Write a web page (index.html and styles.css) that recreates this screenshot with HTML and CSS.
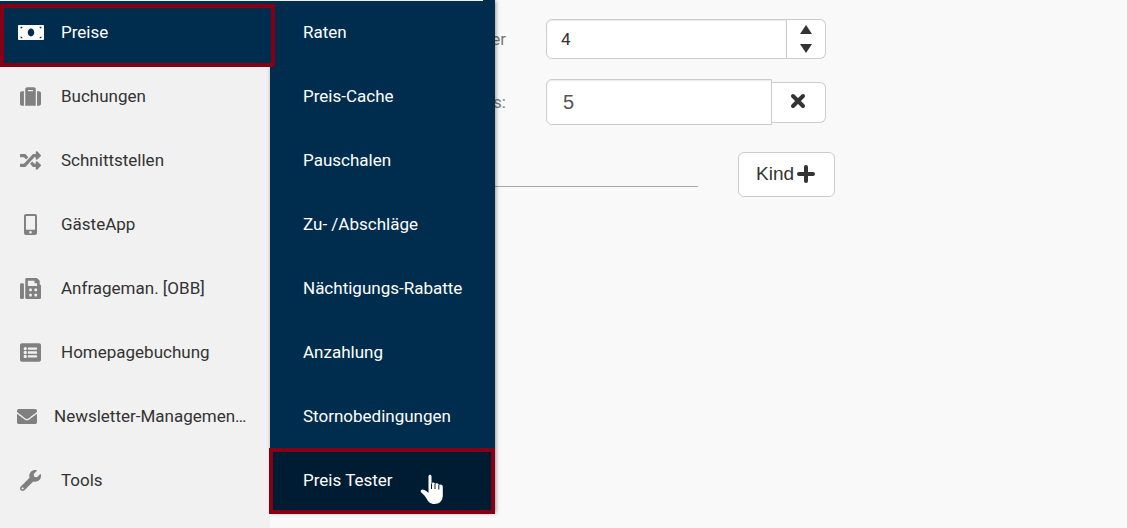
FILE: index.html
```html
<!DOCTYPE html>
<html lang="de">
<head>
    <meta charset="UTF-8">
    <meta name="viewport" content="width=device-width, initial-scale=1.0">
    <title>Preis Tester</title>
    <link rel="stylesheet" href="styles.css">
</head>
<body>

<div class="page">
    <!-- Sidebar -->
    <nav class="sidebar">
        <ul class="menu">
            <li>
                <a href="#" class="menu-link active">
                    <span class="menu-icon"><svg width="26" height="21" viewBox="0 0 640 512"><path d="M608 72H32C14.33 72 0 82 0 96v320c0 14 14.33 24 32 24h576c17.670 0 32-10 32-24V96c0-14-14.330-24-32-24zM64 400v-48c26 0 48 22 48 48H64zm0-240v-48h48c0 26-22 48-48 48zm256 192c-44.190 0-80-42.990-80-96 0-53.020 35.820-96 80-96s80 42.980 80 96c0 53.030-35.830 96-80 96zm256 48h-48c0-26 22-48 48-48v48zm0-240c-26 0-48-22-48-48h48v48z"/></svg></span>
                    <span>Preise</span>
                </a>

                <!-- Flyout -->
                <ul class="flyout">
                    <li><a href="#">Raten</a></li>
                    <li><a href="#">Preis-Cache</a></li>
                    <li><a href="#">Pauschalen</a></li>
                    <li><a href="#">Zu- /Abschläge</a></li>
                    <li><a href="#">Nächtigungs-Rabatte</a></li>
                    <li><a href="#">Anzahlung</a></li>
                    <li><a href="#">Stornobedingungen</a></li>
                    <li>
                        <a href="#" class="selected">Preis Tester
                            <svg class="pointer" width="24" height="31" viewBox="0 0 24 31"><path d="M8.500 2.500C8.500 .2 11.500 .2 11.500 2.500V9.500C12 8 14.700 8.200 15 10C15.800 8.600 18.500 9 18.800 11C20 9.800 22.800 10.500 22.800 12.800V21C22.800 27 19.500 30 14.500 30C10 30 8.200 27.500 6.500 24.500C5 22 3.500 20.500 1.300 18.500C-.2 17 1.500 15 3.500 15.700C5.500 16.300 7 17.500 8.500 19Z"/><path class="pointer-lines" d="M11.500 9.500V15M15 10V15M18.800 11V15.500"/></svg>
                        </a>
                    </li>
                </ul>
            </li>
            <li>
                <a href="#" class="menu-link">
                    <span class="menu-icon"><svg width="21" height="21" viewBox="0 0 512 512"><path d="M128 480h256V80c0-26.500-21.500-48-48-48H176c-26.500 0-48 21.500-48 48v400zm64-384h128v32H192V96zm320 80v256c0 26.500-21.500 48-48 48h-48V128h48c26.500 0 48 21.500 48 48zM96 480H48c-26.500 0-48-21.500-48-48V176c0-26.500 21.500-48 48-48h48v352z"/></svg></span>
                    <span>Buchungen</span>
                </a>
            </li>
            <li>
                <a href="#" class="menu-link">
                    <span class="menu-icon"><svg width="21" height="21" viewBox="0 0 512 512"><path d="M504.971 359.029c9.373 9.373 9.373 24.569 0 33.941l-80 79.984c-15.010 15.010-40.971 4.490-40.971-16.971V416h-58.785a12.004 12.004 0 0 1-8.773-3.812l-70.556-75.596 53.333-57.143L352 336h32v-39.981c0-21.438 25.943-31.998 40.971-16.971l80 79.981zM12 176h84l52.781 56.551 53.333-57.143-70.556-75.596A11.999 11.999 0 0 0 122.785 96H12c-6.627 0-12 5.373-12 12v56c0 6.627 5.373 12 12 12zm372 0v39.984c0 21.460 25.961 31.980 40.971 16.971l80-79.984c9.373-9.373 9.373-24.569 0-33.941l-80-79.981C409.943 24.021 384 34.582 384 56.019V96h-58.785a12.004 12.004 0 0 0-8.773 3.812L96 336H12c-6.627 0-12 5.373-12 12v56c0 6.627 5.373 12 12 12h110.785c3.326 0 6.503-1.381 8.773-3.812L352 176h32z"/></svg></span>
                    <span>Schnittstellen</span>
                </a>
            </li>
            <li>
                <a href="#" class="menu-link">
                    <span class="menu-icon"><svg width="13" height="21" viewBox="0 0 320 512"><path d="M272 0H48C21.500 0 0 21.500 0 48v416c0 26.500 21.500 48 48 48h224c26.500 0 48-21.500 48-48V48c0-26.500-21.500-48-48-48zM160 480c-17.700 0-32-14.300-32-32s14.300-32 32-32 32 14.300 32 32-14.300 32-32 32zm112-108c0 6.600-5.400 12-12 12H60c-6.600 0-12-5.400-12-12V60c0-6.600 5.400-12 12-12h200c6.600 0 12 5.400 12 12v312z"/></svg></span>
                    <span>GästeApp</span>
                </a>
            </li>
            <li>
                <a href="#" class="menu-link">
                    <span class="menu-icon"><svg width="21" height="21" viewBox="0 0 512 512"><path d="M480 160V77.250a32 32 0 0 0-9.380-22.630L425.370 9.370A32 32 0 0 0 402.750 0H160a32 32 0 0 0-32 32v448a32 32 0 0 0 32 32h320a32 32 0 0 0 32-32V192a32 32 0 0 0-32-32zM288 432a16 16 0 0 1-16 16h-32a16 16 0 0 1-16-16v-32a16 16 0 0 1 16-16h32a16 16 0 0 1 16 16zm0-128a16 16 0 0 1-16 16h-32a16 16 0 0 1-16-16v-32a16 16 0 0 1 16-16h32a16 16 0 0 1 16 16zm128 128a16 16 0 0 1-16 16h-32a16 16 0 0 1-16-16v-32a16 16 0 0 1 16-16h32a16 16 0 0 1 16 16zm0-128a16 16 0 0 1-16 16h-32a16 16 0 0 1-16-16v-32a16 16 0 0 1 16-16h32a16 16 0 0 1 16 16zm0-112H192V64h160v48a16 16 0 0 0 16 16h48zM64 128H32a32 32 0 0 0-32 32v320a32 32 0 0 0 32 32h32a32 32 0 0 0 32-32V160a32 32 0 0 0-32-32z"/></svg></span>
                    <span>Anfrageman. [OBB]</span>
                </a>
            </li>
            <li>
                <a href="#" class="menu-link">
                    <span class="menu-icon"><svg width="21" height="21" viewBox="0 0 512 512"><path d="M464 480H48c-26.510 0-48-21.490-48-48V80c0-26.510 21.490-48 48-48h416c26.510 0 48 21.490 48 48v352c0 26.510-21.490 48-48 48zM128 120c-22.091 0-40 17.909-40 40s17.909 40 40 40 40-17.909 40-40-17.909-40-40-40zm0 96c-22.091 0-40 17.909-40 40s17.909 40 40 40 40-17.909 40-40-17.909-40-40-40zm0 96c-22.091 0-40 17.909-40 40s17.909 40 40 40 40-17.909 40-40-17.909-40-40-40zm288-136v-32c0-6.627-5.373-12-12-12H204c-6.627 0-12 5.373-12 12v32c0 6.627 5.373 12 12 12h200c6.627 0 12-5.373 12-12zm0 96v-32c0-6.627-5.373-12-12-12H204c-6.627 0-12 5.373-12 12v32c0 6.627 5.373 12 12 12h200c6.627 0 12-5.373 12-12zm0 96v-32c0-6.627-5.373-12-12-12H204c-6.627 0-12 5.373-12 12v32c0 6.627 5.373 12 12 12h200c6.627 0 12-5.373 12-12z"/></svg></span>
                    <span>Homepagebuchung</span>
                </a>
            </li>
            <li>
                <a href="#" class="menu-link long">
                    <span class="menu-icon"><svg width="21" height="21" viewBox="0 0 512 512"><path d="M502.300 190.800c3.900-3.100 9.700-.2 9.700 4.700V400c0 26.500-21.500 48-48 48H48c-26.500 0-48-21.500-48-48V195.600c0-5 5.700-7.800 9.700-4.700 22.400 17.400 52.100 39.500 154.100 113.600 21.100 15.400 56.700 47.800 92.200 47.600 35.700.3 72-32.800 92.300-47.600 102-74.100 131.600-96.300 154-113.700zM256 320c23.200.4 56.600-29.200 73.400-41.400 132.700-96.300 142.800-104.700 173.400-128.700 5.800-4.500 9.200-11.500 9.200-18.900v-19c0-26.500-21.500-48-48-48H48c-26.500 0-48 21.500-48 48v19c0 7.400 3.400 14.300 9.200 18.900 30.600 23.900 40.700 32.400 173.400 128.700 16.800 12.200 50.200 41.800 73.400 41.400z"/></svg></span>
                    <span>Newsletter-Managemen…</span>
                </a>
            </li>
            <li>
                <a href="#" class="menu-link">
                    <span class="menu-icon"><svg width="21" height="21" viewBox="0 0 512 512"><path d="M507.730 109.100c-2.240-9.030-13.540-12.090-20.120-5.510l-74.360 74.360-67.880-11.310-11.310-67.880 74.360-74.360c6.620-6.620 3.430-17.900-5.660-20.160-47.380-11.740-99.550.91-136.580 37.930-39.640 39.640-50.550 97.100-34.050 147.200L18.740 402.760c-24.990 24.990-24.990 65.510 0 90.500 24.990 24.990 65.510 24.990 90.500 0l213.210-213.210c50.120 16.710 107.470 5.680 147.370-34.220 37.070-37.070 49.700-89.320 37.910-136.730zM64 472c-13.250 0-24-10.750-24-24 0-13.260 10.750-24 24-24s24 10.740 24 24c0 13.250-10.750 24-24 24z"/></svg></span>
                    <span>Tools</span>
                </a>
            </li>
        </ul>
    </nav>

    <!-- Form -->
    <main class="content">
        <form>
            <div class="form-row">
                <label for="count">er</label>
                <div class="field">
                    <input type="text" id="count" value="4">
                    <div class="spinner">
                        <button type="button" aria-label="Mehr"><svg width="12" height="9" viewBox="0 0 12 9"><path d="M6 0l6 9H0z"/></svg></button>
                        <button type="button" aria-label="Weniger"><svg width="12" height="9" viewBox="0 0 12 9"><path d="M0 0h12L6 9z"/></svg></button>
                    </div>
                </div>
            </div>

            <div class="form-row">
                <label for="age">s:</label>
                <div class="field field-large">
                    <input type="text" id="age" value="5">
                    <button type="button" class="btn-remove" aria-label="Entfernen"><svg width="16" height="16" viewBox="0 0 16 16"><path d="M3 3l10 10M13 3L3 13"/></svg></button>
                </div>
            </div>

            <div class="add-row">
                <hr>
                <button type="button" class="btn-add">Kind <svg width="18" height="18" viewBox="0 0 18 18"><path d="M9 2v14M2 9h14"/></svg></button>
            </div>
        </form>
    </main>
</div>

</body>
</html>
```
FILE: styles.css
```css
/* General Styles */
* {
    box-sizing: border-box;
}

body {
    margin: 0;
    font-family: Roboto, sans-serif;
    font-size: 17px;
    line-height: 24px;
    color: #333;
    background-color: #f9f9f9;
}

ul {
    list-style: none;
    margin: 0;
    padding: 0;
}

.page {
    display: flex;
    min-height: 100vh;
}

/* Sidebar */
.sidebar {
    position: relative;
    z-index: 1;
    flex: none;
    width: 270px;
    background-color: #f1f1f1;
}

/* Divider across sidebar and flyout */
.sidebar::after {
    content: "";
    position: absolute;
    z-index: 3;
    top: 0;
    left: 0;
    width: 483px;
    height: 1px;
    background-color: #f1f1f1;
}

.menu-link {
    display: flex;
    align-items: center;
    gap: 17px;
    height: 64px;
    padding: 0 17px;
    color: #333;
    text-decoration: none;
    white-space: nowrap;
}

.menu-icon {
    display: flex;
    justify-content: center;
    flex: none;
    width: 27px;
    fill: #808080;
}

.menu-link.long .menu-icon {
    width: 20px;
}

.menu-link.active {
    position: relative;
    z-index: 2;
    color: #fff;
    background-color: #002d4d;
}

.menu-link.active .menu-icon {
    fill: #fff;
}

.menu-link.active::after {
    content: "";
    position: absolute;
    inset: 4px -5px -3px 0;
    border: 4px solid #850014;
}

/* Flyout */
.flyout {
    position: absolute;
    top: 0;
    left: 100%;
    width: 225px;
    background-color: #002d4d;
    box-shadow: 1px 1px 4px rgba(0, 0, 0, 0.4);
}

.flyout a {
    position: relative;
    display: flex;
    align-items: center;
    height: 64px;
    padding: 0 33px;
    color: #fff;
    text-decoration: none;
    white-space: nowrap;
}

.flyout a.selected {
    background-color: #001c33;
}

.flyout a.selected::after {
    content: "";
    position: absolute;
    inset: 0 0 -2px -1px;
    border: 4px solid #850014;
}

.pointer {
    position: absolute;
    top: 26px;
    right: 51px;
    fill: #fff;
}

.pointer-lines {
    fill: none;
    stroke: #001c33;
}

/* Form */
.content {
    flex: 1;
    padding-top: 19px;
}

.form-row {
    display: flex;
    align-items: center;
    gap: 40px;
    margin-bottom: 20px;
}

.form-row label {
    width: 236px;
    text-align: right;
    color: #777;
}

.field {
    display: flex;
    align-items: center;
    width: 280px;
}

.field input {
    flex: 1;
    min-width: 0;
    height: 40px;
    padding: 0 14px;
    border: 1px solid #ccc;
    border-radius: 6px 0 0 6px;
    box-shadow: inset 0 1px 1px rgba(0, 0, 0, 0.08);
    background-color: #fff;
    font-family: inherit;
    font-size: 17px;
    color: #333;
}

.field-large input {
    height: 46px;
    padding: 0 16px;
    font-family: "Liberation Sans", Arial, sans-serif;
    font-size: 20px;
    color: #555;
}

.spinner {
    display: flex;
    flex-direction: column;
    width: 39px;
    height: 40px;
    border: 1px solid #ccc;
    border-left: 0;
    border-radius: 0 6px 6px 0;
    background-color: #fff;
}

.spinner button {
    display: flex;
    flex: 1;
    align-items: center;
    justify-content: center;
    padding: 0;
    border: 0;
    background: none;
    fill: #333;
}

.btn-remove {
    display: flex;
    align-items: center;
    justify-content: center;
    width: 54px;
    height: 41px;
    padding: 0 2px 2px 0;
    border: 1px solid #ccc;
    border-left: 0;
    border-radius: 0 6px 6px 0;
    background-color: #fff;
    stroke: #333;
    stroke-width: 4px;
    stroke-linecap: round;
}

.add-row {
    display: flex;
    align-items: center;
    gap: 40px;
    margin-top: 27px;
}

.add-row hr {
    width: 428px;
    margin: 24px 0 0;
    border: 0;
    border-top: 1px solid #aaa;
}

.btn-add {
    display: flex;
    align-items: center;
    justify-content: center;
    gap: 3px;
    width: 97px;
    height: 45px;
    padding: 0 2px 2px 0;
    border: 1px solid #ccc;
    border-radius: 6px;
    background-color: #fff;
    font-family: "Liberation Sans", Arial, sans-serif;
    font-size: 19px;
    color: #333;
    stroke-linecap: round;
}

.btn-add svg {
    stroke: #333;
    stroke-width: 4px;
}
```
